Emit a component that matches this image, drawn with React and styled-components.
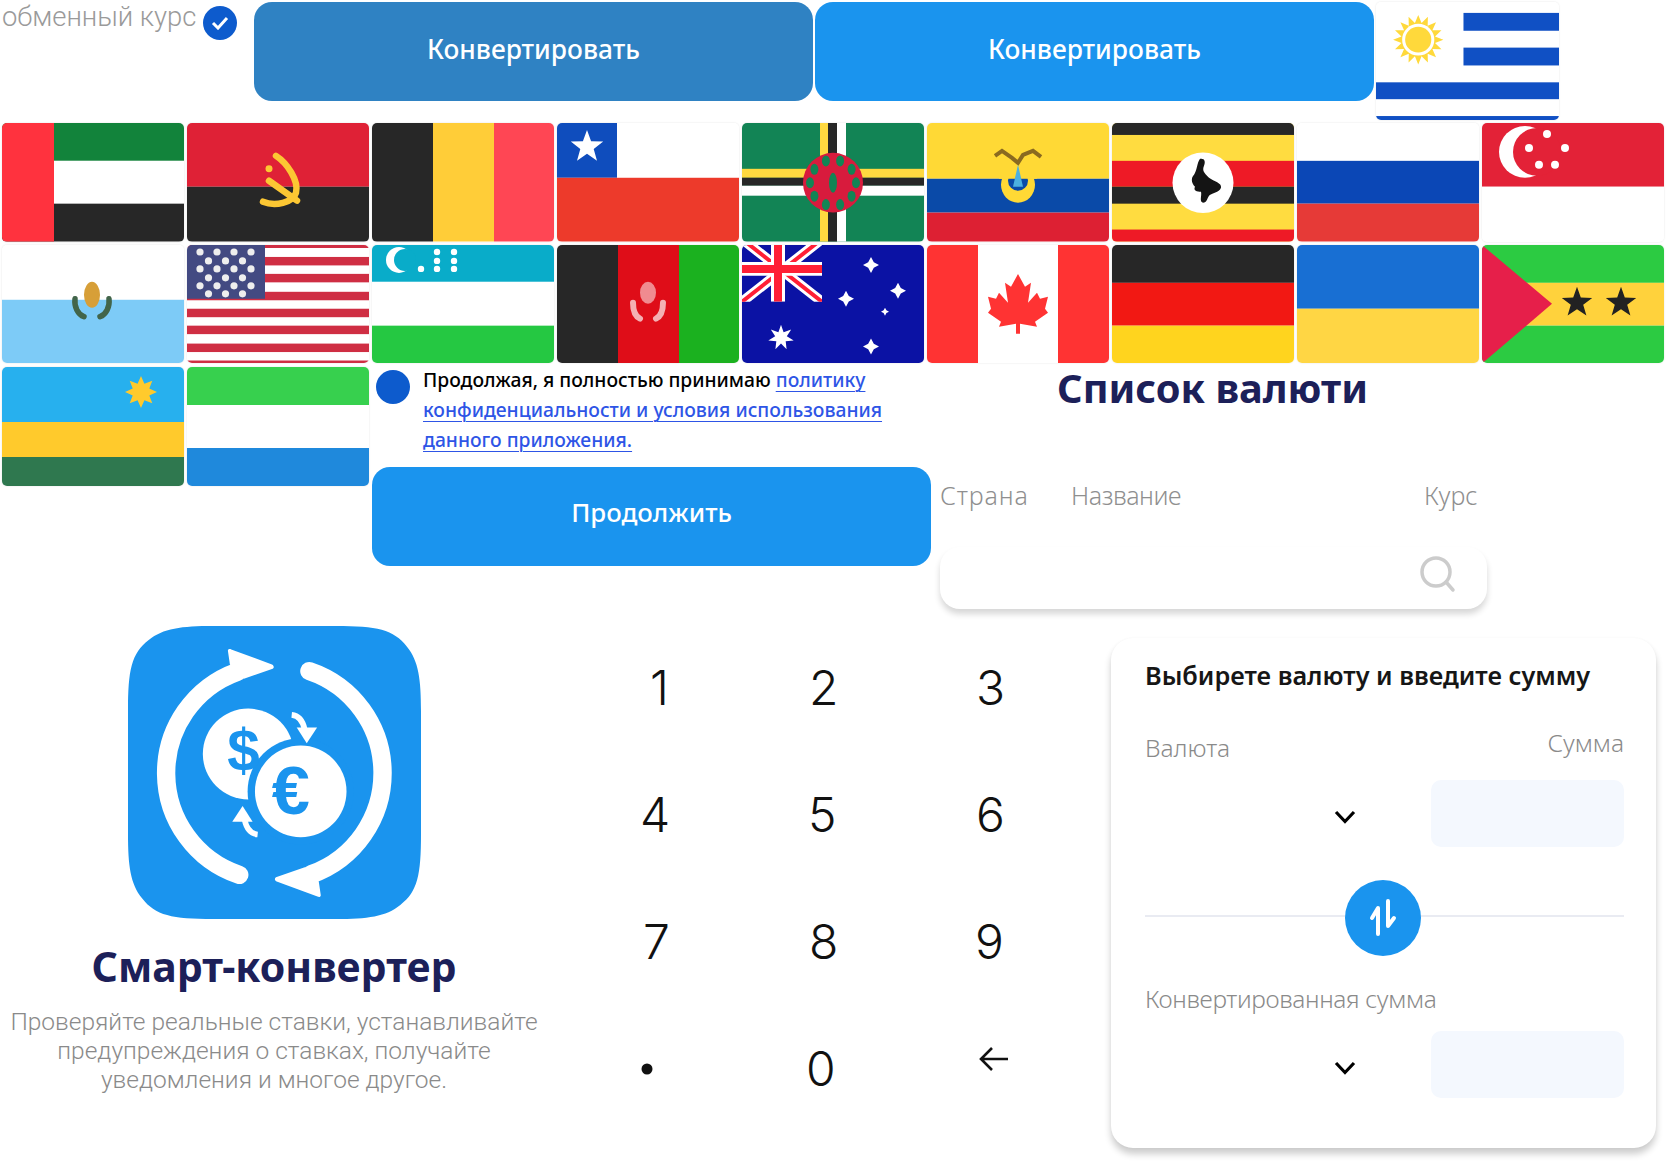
import React from "react";
import styled, { createGlobalStyle } from "styled-components";

const Global = createGlobalStyle`
  html, body { margin: 0; padding: 0; background: #fff; }
  body { font-family: "Noto Sans", "Open Sans", sans-serif; }
  * { box-sizing: border-box; }
`;

const Sheet = styled.div`
  width: 1668px;
  height: 1165px;
  overflow: hidden;
  background: #fff;
`;

const TopRow = styled.div`
  display: flex;
  height: 123px;
  padding: 2px 0 0 2px;
`;

const RateBox = styled.div`
  width: 252px;
  display: flex;
  align-items: flex-start;
  gap: 7px;
`;

const RateLabel = styled.span`
  font-family: Roboto, sans-serif;
  font-size: 27.4px;
  line-height: 30px;
  font-weight: 300;
  color: #9a9a9a;
  white-space: nowrap;
`;

const Dot = styled.span`
  flex: none;
  width: 34px;
  height: 34px;
  border-radius: 50%;
  background: #0d5bcd;
  display: flex;
  align-items: center;
  justify-content: center;
  margin: ${(p) => p.$margin || 0};
`;

const Btn = styled.button`
  flex: none;
  width: 559px;
  height: 99px;
  margin-right: 2px;
  padding: 0 0 ${(p) => p.$pb || 6}px;
  border: 0;
  border-radius: 18px;
  background: ${(p) => p.$bg || "#1a94ee"};
  color: #fff;
  font-family: inherit;
  font-size: ${(p) => p.$fs || 26.3}px;
  font-weight: 500;
`;

const FlagGrid = styled.div`
  display: grid;
  grid-template-columns: repeat(9, 1fr);
  grid-auto-rows: 118.5px;
  gap: 3px;
  padding: 0 4px 0 2px;
`;

const Tile = styled.div`
  border-radius: 5px;
  overflow: hidden;
  width: ${(p) => (p.$w ? p.$w + "px" : "auto")};
  height: ${(p) => (p.$h ? p.$h + "px" : "auto")};
  box-shadow: 0 0 2px rgba(0, 0, 0, 0.12);
  flex: none;
  > svg { display: block; width: 100%; height: 100%; }
`;

const MidRow = styled.div`
  display: flex;
  height: 257px;
  margin-top: 4px;
  padding-left: 2px;
`;

const MiniFlags = styled.div`
  display: flex;
  gap: 3px;
  width: 370px;
  align-items: flex-start;
`;

const ConsentCol = styled.div`
  width: 559px;
`;

const Consent = styled.div`
  display: flex;
  height: 100px;
`;

const ConsentText = styled.p`
  margin: -2px 0 0 13px;
  font-size: 19.3px;
  line-height: 30px;
  font-weight: 500;
  color: #000;
  white-space: nowrap;
  a { color: #2e55e6; text-decoration: underline; text-underline-offset: 4px; text-decoration-thickness: 1px; }
`;

const ListCol = styled.div`
  width: 547px;
  margin-left: 9px;
`;

const ListTitle = styled.h2`
  margin: -2px 0 0 117px;
  font-size: 39.8px;
  line-height: 46px;
  font-weight: 700;
  color: #1c2059;
  white-space: nowrap;
`;

const ListHeads = styled.div`
  display: grid;
  grid-template-columns: 131px 353px auto;
  margin-top: 68px;
  font-size: 25px;
  line-height: 32px;
  font-weight: 300;
  color: #8f8f8f;
`;

const HeadCell = styled.span`
  letter-spacing: ${(p) => p.$ls || 0}px;
`;

const SearchBar = styled.div`
  height: 62px;
  margin-top: 36px;
  padding: 8px 30px 0 0;
  border-radius: 20px;
  background: #fff;
  box-shadow: 0 5px 6px rgba(0, 0, 0, 0.16);
  display: flex;
  justify-content: flex-end;
`;

const BottomRow = styled.div`
  display: flex;
  align-items: flex-start;
`;

const Intro = styled.div`
  width: 548px;
  padding-top: 2px;
  display: flex;
  flex-direction: column;
  align-items: center;
  text-align: center;
`;

const AppLogo = styled.svg`
  display: block;
  width: 293px;
  height: 293px;
`;

const AppName = styled.h1`
  margin: 24px 0 0;
  font-size: 41px;
  line-height: 46px;
  font-weight: 700;
  color: #1c2059;
  white-space: nowrap;
`;

const AppText = styled.p`
  margin: 18px 0 0;
  font-family: Roboto, sans-serif;
  font-size: 24.5px;
  line-height: 29px;
  font-weight: 300;
  color: #8a8a8a;
  white-space: nowrap;
`;

const Numpad = styled.div`
  width: 562px;
  margin-left: 92px;
  display: grid;
  grid-template-columns: 165px 170px 150px;
  grid-auto-rows: 127px;
  align-items: center;
  font-family: Inter, sans-serif;
  font-size: 48px;
  font-weight: 300;
  color: #111;
`;

const Key = styled.span`
  display: block;
  line-height: 1;
  margin-left: ${(p) => p.$nudge || 0}px;
`;

const Card = styled.div`
  width: 545px;
  height: 510px;
  margin-top: 14px;
  margin-left: -91px;
  padding: 20px 32px 0 34px;
  border-radius: 22px;
  background: #fff;
  box-shadow: 0 6px 7px rgba(0, 0, 0, 0.2), 0 0 3px rgba(0, 0, 0, 0.03);
`;

const CardTitle = styled.h3`
  margin: 0;
  font-size: 25.3px;
  line-height: 34px;
  font-weight: 600;
  color: #161616;
  white-space: nowrap;
`;

const FieldHead = styled.div`
  display: flex;
  justify-content: space-between;
  align-items: flex-start;
  margin-top: ${(p) => p.$top || 0}px;
  font-size: 24.5px;
  letter-spacing: ${(p) => p.$ls || 0}px;
  line-height: 32px;
  font-weight: 300;
  color: #8a8a8a;
`;

const FieldRight = styled.span`
  margin: -5px 0 0 0;
`;

const FieldRow = styled.div`
  display: flex;
  justify-content: flex-end;
  align-items: center;
  gap: 75px;
  margin-top: ${(p) => p.$top || 0}px;
`;

const ChevronBox = styled.svg`
  margin-top: 6px;
`;

const AmountBox = styled.div`
  width: 193px;
  height: 67px;
  border-radius: 10px;
  background: #f4f8fe;
`;

const Split = styled.div`
  position: relative;
  height: 2px;
  margin-top: 68px;
  background: #e9ebf2;
`;

const SwapBtn = styled.div`
  position: absolute;
  left: 200px;
  top: -35px;
  width: 76px;
  height: 76px;
  border-radius: 50%;
  background: #1a94ee;
  display: flex;
  align-items: center;
  justify-content: center;
`;

const star = (cx, cy, R, r, n = 5) =>
  Array.from({ length: n * 2 }, (_, i) => {
    const a = (Math.PI * i) / n - Math.PI / 2;
    const d = i % 2 ? r : R;
    return `${(cx + d * Math.cos(a)).toFixed(1)},${(cy + d * Math.sin(a)).toFixed(1)}`;
  }).join(" ");

const Flag = ({ children, w, h }) => (
  <Tile $w={w} $h={h}>
    <svg viewBox="0 0 182 119" preserveAspectRatio="none">{children}</svg>
  </Tile>
);

const R = (x, y, w, h, fill) => <rect x={x} y={y} width={w} height={h} fill={fill} />;

const hBands = (a, b, c, y1 = 38, y2 = 81) => (
  <>
    {R(0, 0, 182, y1, a)}
    {R(0, y1, 182, y2 - y1, b)}
    {R(0, y2, 182, 119 - y2, c)}
  </>
);

const vBands = (a, b, c) => (
  <>
    {R(0, 0, 61, 119, a)}
    {R(61, 0, 61, 119, b)}
    {R(122, 0, 60, 119, c)}
  </>
);

const stripeY = [0, 12, 29, 47, 64, 81, 99, 116];
const starRows = [7, 16, 24, 33, 41, 49];

const flags = [
  <>
    {hBands("#12833b", "#fff", "#272727")}
    {R(0, 0, 52, 119, "#ff323e")}
  </>,
  <>
    {R(0, 0, 182, 64, "#df2136")}
    {R(0, 64, 182, 55, "#272727")}
    <g fill="none" stroke="#fcc733" strokeWidth="6.5" strokeLinecap="round">
      <path d="M89 33 C100 40 112 58 109 70 C106 80 88 84 76 79" />
      <path d="M82 58 L110 78" />
    </g>
    <circle cx="82" cy="46" r="3.5" fill="#fcc733" />
  </>,
  vBands("#272727", "#ffcd38", "#ff4654"),
  <>
    {R(0, 0, 182, 55, "#fff")}
    {R(0, 0, 60, 55, "#0f4dbd")}
    {R(0, 55, 182, 64, "#ed3a2b")}
    <polygon points={star(30, 24, 17, 7)} fill="#fff" />
  </>,
  <>
    {R(0, 0, 182, 119, "#128455")}
    {R(0, 46, 182, 9, "#ffd940")}
    {R(0, 55, 182, 8, "#272727")}
    {R(0, 63, 182, 10, "#fff")}
    {R(78, 0, 8, 119, "#ffd940")}
    {R(86, 0, 9, 119, "#272727")}
    {R(95, 0, 9, 119, "#fff")}
    <circle cx="91" cy="60" r="30" fill="#d81b3d" />
    {[0, 1, 2, 3, 4, 5, 6, 7, 8, 9].map((i) => (
      <ellipse
        key={i}
        cx={91 + 23 * Math.cos((i * Math.PI) / 5)}
        cy={60 + 23 * Math.sin((i * Math.PI) / 5)}
        rx="4"
        ry="5.5"
        fill="#128455"
      />
    ))}
    <ellipse cx="91" cy="60" rx="4" ry="10" fill="#128455" />
  </>,
  <>
    {hBands("#ffd935", "#0a4aa8", "#dd2033", 56, 90)}
    <ellipse cx="91" cy="62" rx="17" ry="18" fill="#ffd935" />
    <ellipse cx="91" cy="58" rx="10" ry="10" fill="#0a4aa8" />
    {R(72, 40, 38, 16, "#ffd935")}
    <polygon points="91,42 86,64 96,64" fill="#4cb0e0" />
    <path d="M68 33 L75 28 L85 35 L91 40 L96 32 L106 28 L114 34" fill="none" stroke="#8a6a20" strokeWidth="4" />
  </>,
  <>
    {R(0, 0, 182, 119, "#ffdc40")}
    {R(0, 0, 182, 12, "#272727")}
    {R(0, 38, 182, 26, "#ee1a26")}
    {R(0, 64, 182, 17, "#272727")}
    {R(0, 107, 182, 12, "#ee1a26")}
    <circle cx="91" cy="60" r="30.5" fill="#fff" />
    <path d="M88 36 C92 35 94 38 92 43 C90 48 92 50 97 55 C102 59 110 60 109 65 C107 70 100 70 97 73 C95 76 95 80 91 80 C87 79 90 73 89 69 C85 69 81 68 83 64 C79 60 79 55 82 52 C85 48 85 40 88 36 Z" fill="#141414" />
  </>,
  hBands("#fff", "#0b47b6", "#e63a37"),
  <>
    {R(0, 0, 182, 64, "#e32237")}
    {R(0, 64, 182, 55, "#fff")}
    <circle cx="43" cy="29" r="26" fill="#fff" />
    <circle cx="55" cy="29" r="24" fill="#e32237" />
    {[[65, 11], [83, 25], [73, 42], [57, 42], [47, 25]].map(([x, y]) => (
      <circle key={x} cx={x} cy={y} r="4" fill="#fff" />
    ))}
  </>,
  <>
    {R(0, 0, 182, 55, "#fff")}
    {R(0, 55, 182, 64, "#7dcbf7")}
    <ellipse cx="90" cy="50" rx="8" ry="13" fill="#d79f38" />
    <g fill="none" stroke="#42654a" strokeWidth="5.5" strokeLinecap="round">
      <path d="M73 54 C72 62 76 70 82 72" />
      <path d="M107 54 C108 62 104 70 98 72" />
    </g>
  </>,
  <>
    {R(0, 0, 182, 119, "#fff")}
    {stripeY.map((y, i) => R(0, y, 182, i === 0 || i === 7 ? 3 : 8.5, "#cf2e43"))}
    {R(0, 0, 78, 54, "#434a82")}
    {starRows.map((y, r) =>
      (r % 2 ? [21.5, 38.5, 55.5] : [13, 30, 47, 64]).map((x) => (
        <circle key={`${r}-${x}`} cx={x} cy={y} r="3.6" fill="#eee" />
      ))
    )}
  </>,
  <>
    {hBands("#09acc9", "#fff", "#25c842", 37, 81)}
    <circle cx="27" cy="15" r="13" fill="#fff" />
    <circle cx="33" cy="15" r="11" fill="#09acc9" />
    {[[65, 7], [82, 7], [65, 16], [82, 16], [49, 24], [65, 24], [82, 24]].map(([x, y]) => (
      <circle key={`${x}${y}`} cx={x} cy={y} r="3.2" fill="#fff" />
    ))}
  </>,
  <>
    {vBands("#272727", "#df0d18", "#1bb11f")}
    <ellipse cx="91" cy="48" rx="8" ry="11" fill="#f08b90" />
    <g fill="none" stroke="#f4b0b3" strokeWidth="6" strokeLinecap="round">
      <path d="M76 58 C76 66 79 72 83 74" />
      <path d="M106 58 C106 66 103 72 99 74" />
    </g>
  </>,
  <>
    {R(0, 0, 182, 119, "#0b12a4")}
    <svg x="0" y="0" width="80" height="57" viewBox="0 0 80 57">
      <path d="M0 -6 L80 57 M80 -6 L0 57" stroke="#fff" strokeWidth="10" />
      <path d="M0 -6 L80 57 M80 -6 L0 57" stroke="#ff1f35" strokeWidth="4" />
      <path d="M36 0 V57 M0 24 H80" stroke="#fff" strokeWidth="14" />
      <path d="M36 0 V57 M0 24 H80" stroke="#ff1f35" strokeWidth="8" />
    </svg>
    <polygon points={star(39, 93, 13, 6, 7)} fill="#fff" />
    {[[129, 20, 8], [156, 46, 8], [104, 54, 8], [143, 67, 4], [129, 102, 8]].map(([x, y, s]) => (
      <polygon key={x + y} points={star(x, y, s, s * 0.5, 4)} fill="#fff" />
    ))}
  </>,
  <>
    {R(0, 0, 182, 119, "#ff3333")}
    {R(51, 0, 80, 119, "#fff")}
    <path d="M91 29 L98 42 L104 38 L101 58 L110 48 L113 54 L121 52 L118 64 L121 68 L108 77 L110 82 L93 79 L93 89 L89 89 L89 79 L72 82 L74 77 L61 68 L64 64 L61 52 L69 54 L72 48 L81 58 L78 38 L84 42 Z" fill="#ff3333" />
  </>,
  hBands("#272727", "#f21813", "#ffd41e"),
  <>
    {R(0, 0, 182, 64, "#186fd3")}
    {R(0, 64, 182, 55, "#ffd644")}
  </>,
  <>
    {hBands("#2ccb42", "#ffd23c", "#2ccb42")}
    <polygon points="0,0 70,59 0,119" fill="#e61f4a" />
    <polygon points={star(95, 58, 16, 6.5)} fill="#222" />
    <polygon points={star(139, 58, 16, 6.5)} fill="#222" />
  </>,
  <>
    {hBands("#27b0ee", "#ffca2c", "#2f784f", 55, 90)}
    <polygon points={star(139, 25, 16, 9, 8)} fill="#ffca2c" />
  </>,
];

const uruguay = (
  <>
    {R(0, 0, 182, 119, "#fff")}
    {R(87, 11, 95, 18, "#1050c4")}
    {R(87, 46, 95, 18, "#1050c4")}
    {R(0, 81, 182, 17, "#1050c4")}
    {R(0, 115, 182, 4, "#1050c4")}
    <polygon points={star(42, 38, 25, 17, 16)} fill="#ffd93b" />
    <circle cx="42" cy="38" r="16" fill="#fff" />
    <circle cx="42" cy="38" r="13" fill="#ffd93b" />
  </>
);

const sierra = hBands("#37d04e", "#fff", "#1f89dc");

const Chevron = () => (
  <ChevronBox width="22" height="14" viewBox="0 0 22 14">
    <path d="M2 2 L11 11.5 L20 2" fill="none" stroke="#000" strokeWidth="3.2" />
  </ChevronBox>
);

const BigLogo = () => (
  <AppLogo viewBox="85 50 877 877">
    <path d="M340 50 H707 C830 50 880 60 920 112 C955 155 962 210 962 305 V672 C962 795 952 845 900 885 C857 920 802 927 707 927 H340 C217 927 167 917 127 865 C92 822 85 767 85 672 V305 C85 182 95 132 147 92 C190 57 245 50 340 50 Z" fill="#1a94ee" />
    <g id="sweep">
      <path d="M418 795 A322 322 0 0 1 412 187" fill="none" stroke="#fff" strokeWidth="55" strokeLinecap="round" />
      <path d="M384 124 C384 118 390 118 394 120 L516 165 C524 170 522 177 516 179 L432 208 L390 165 Z" fill="#fff" />
    </g>
    <use href="#sweep" transform="rotate(180 523 490)" />
    <circle cx="445" cy="433" r="136" fill="#fff" />
    <circle cx="602" cy="545" r="159" fill="#1a94ee" />
    <circle cx="602" cy="545" r="137" fill="#fff" />
    <text x="431" y="483" textAnchor="middle" fontFamily="Liberation Sans" fontWeight="700" fontSize="175" fill="#1a94ee">$</text>
    <text x="572" y="614" textAnchor="middle" fontFamily="Liberation Sans" fontWeight="700" fontSize="205" fill="#1a94ee">€</text>
    <g id="twirl">
      <path d="M575 316 C595 318 608 332 614 360" fill="none" stroke="#fff" strokeWidth="17" />
      <polygon points="590,354 651,354 620,401" fill="#fff" />
    </g>
    <use href="#twirl" transform="rotate(180 524 495)" />
  </AppLogo>
);

const keys = [
  ["1", 10], ["2", 4], ["3", 1],
  ["4", 0], ["5", 3], ["6", 1],
  ["7", 3], ["8", 4], ["9", 0],
];

const App = () => (
  <>
    <Global />
    <Sheet>
      <TopRow>
        <RateBox>
          <RateLabel>обменный курс</RateLabel>
          <Dot $margin="4px 0 0">
            <svg width="18" height="14" viewBox="0 0 18 14">
              <path d="M2 7 L7 12 L16 2" fill="none" stroke="#fff" strokeWidth="3" />
            </svg>
          </Dot>
        </RateBox>
        <Btn $bg="#2f82c3">Конвертировать</Btn>
        <Btn>Конвертировать</Btn>
        <Flag w={183} h={118}>{uruguay}</Flag>
      </TopRow>
      <FlagGrid>
        {flags.slice(0, 18).map((f, i) => (
          <Flag key={i}>{f}</Flag>
        ))}
      </FlagGrid>
      <MidRow>
        <MiniFlags>
          <Flag w={182} h={119}>{flags[18]}</Flag>
          <Flag w={182} h={119}>{sierra}</Flag>
        </MiniFlags>
        <ConsentCol>
          <Consent>
            <Dot $margin="3px 0 0 4px" />
            <ConsentText>
              Продолжая, я полностью принимаю <a href="#policy">политику</a>
              <br />
              <a href="#policy">конфиденциальности и условия использования</a>
              <br />
              <a href="#policy">данного приложения.</a>
            </ConsentText>
          </Consent>
          <Btn $fs={25.8} $pb={9}>Продолжить</Btn>
        </ConsentCol>
        <ListCol>
          <ListTitle>Список валюти</ListTitle>
          <ListHeads>
            <HeadCell $ls={0.9}>Страна</HeadCell>
            <HeadCell $ls={-0.4}>Название</HeadCell>
            <HeadCell>Курс</HeadCell>
          </ListHeads>
          <SearchBar>
            <svg width="38" height="38" viewBox="0 0 38 38">
              <circle cx="17" cy="17" r="14" fill="none" stroke="#ccc" strokeWidth="3.5" />
              <path d="M27 27 L34 35" stroke="#ccc" strokeWidth="3.5" strokeLinecap="round" />
            </svg>
          </SearchBar>
        </ListCol>
      </MidRow>
      <BottomRow>
        <Intro>
          <BigLogo />
          <AppName>Смарт-конвертер</AppName>
          <AppText>
            Проверяйте реальные ставки, устанавливайте
            <br />
            предупреждения о ставках, получайте
            <br />
            уведомления и многое другое.
          </AppText>
        </Intro>
        <Numpad>
          {keys.map(([k, n]) => (
            <Key key={k} $nudge={n}>{k}</Key>
          ))}
          <Key $nudge={1}>
            <svg width="12" height="12" viewBox="0 0 12 12" style={{ display: "block" }}>
              <circle cx="6" cy="6" r="5.5" fill="#111" />
            </svg>
          </Key>
          <Key $nudge={1}>0</Key>
          <Key $nudge={4}>
            <svg width="30" height="26" viewBox="0 0 30 26" style={{ marginBottom: 14 }}>
              <path d="M13 2 L2 13 L13 24 M2 13 H29" fill="none" stroke="#111" strokeWidth="2.6" />
            </svg>
          </Key>
        </Numpad>
        <Card>
          <CardTitle>Выбирете валюту и введите сумму</CardTitle>
          <FieldHead $top={40}>
            <span>Валюта</span>
            <FieldRight>Сумма</FieldRight>
          </FieldHead>
          <FieldRow $top={16}>
            <Chevron />
            <AmountBox />
          </FieldRow>
          <Split>
            <SwapBtn>
              <svg width="36" height="44" viewBox="0 0 36 44">
                <path d="M13 38 V12 L7 22 M23 5 V30 L29 22" fill="none" stroke="#fff" strokeWidth="4" strokeLinecap="round" strokeLinejoin="round" />
              </svg>
            </SwapBtn>
          </Split>
          <FieldHead $top={66} $ls={-0.35}>
            <span>Конвертированная сумма</span>
          </FieldHead>
          <FieldRow $top={16}>
            <Chevron />
            <AmountBox />
          </FieldRow>
        </Card>
      </BottomRow>
    </Sheet>
  </>
);

export default App;
